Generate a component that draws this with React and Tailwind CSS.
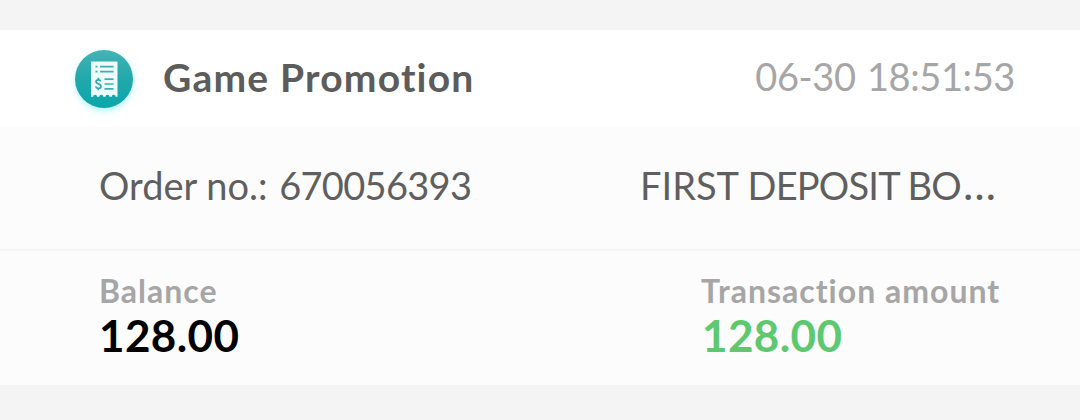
import React from 'react';

const ReceiptIcon = () => (
    <svg width="76" height="76" viewBox="0 0 76 76" fill="none" className="block shrink-0">
        <defs>
            <linearGradient id="disc" x1="38" y1="8" x2="38" y2="66" gradientUnits="userSpaceOnUse">
                <stop stopColor="#45b3b5" />
                <stop offset="0.5" stopColor="#20a8ac" />
                <stop offset="1" stopColor="#0aa6ab" />
            </linearGradient>
            <filter id="glow" x="-20%" y="-20%" width="140%" height="140%">
                <feGaussianBlur stdDeviation="3" />
            </filter>
        </defs>
        <circle cx="38" cy="40" r="29" fill="#9df3f5" opacity="0.75" filter="url(#glow)" />
        <circle cx="38" cy="37" r="29" fill="url(#disc)" />
        <path
            d="M25 19.5h26.5v35.2h-1.8a2 2 0 0 0-4 0h-2.2a2 2 0 0 0-4 0h-2.2a2 2 0 0 0-4 0h-2.2a2 2 0 0 0-4 0H25z"
            fill="#f0fcfc"
        />
        <path d="M29.5 24.7h2M34 24.7h13.5M29.5 29.6h2M34 29.6h13.5M38.5 37.2h9M38.5 42h9M38.5 46.8h9" stroke="#3bb0b3" strokeWidth="1.7" />
        <path
            d="M34.8 39.4c-.4-1.1-1.3-1.6-2.4-1.6-1.4 0-2.4.7-2.4 1.9 0 2.8 5 1.6 5 4.5 0 1.3-1 2.1-2.6 2.1-1.4 0-2.4-.6-2.7-1.9M32.4 35.8v2M32.4 46.3v2"
            stroke="#2aa9ad"
            strokeWidth="1.7"
        />
    </svg>
);

const App = () => {
    return (
        <div className="h-[420px] w-full overflow-hidden bg-[#f4f4f4] pt-[30px] font-['Lato',sans-serif]">
            <div className="h-[355px] bg-[#fcfcfc]">
                {/* Header */}
                <div className="flex h-[97px] items-start justify-between bg-white pl-[66px] pr-[65px]">
                    <div className="flex items-start">
                        <div className="pt-[12px]">
                            <ReceiptIcon />
                        </div>
                        <h1 className="ml-[21px] mt-[24px] whitespace-nowrap text-[39px] font-bold leading-[46px] tracking-[1.2px] text-[#5c5c5c]">
                            Game Promotion
                        </h1>
                    </div>
                    <span className="mt-[23px] whitespace-nowrap text-[38px] leading-[46px] tracking-[-0.4px] text-[#a6a6a6] [word-spacing:2px]">
                        06-30 18:51:53
                    </span>
                </div>

                {/* Order */}
                <div className="flex h-[124px] items-start justify-between border-b-2 border-[#f5f5f5] pl-[99px] pr-[78px] pt-[35px] text-[38px] leading-[46px] text-[#5f5f5f]">
                    <span className="whitespace-nowrap">
                        Order no.: <span className="ml-[2px] tracking-[-0.7px]">670056393</span>
                    </span>
                    <span className="w-[362px] whitespace-nowrap">
                        FIRST <span className="tracking-[-0.8px]">DEPOSIT BO</span>
                        <span className="ml-[2px] text-[44px] leading-[0]">…</span>
                    </span>
                </div>

                {/* Amounts */}
                <div className="flex items-start justify-between pl-[99px] pr-[74px] pt-[20px] font-bold">
                    <div className="flex flex-col">
                        <span className="text-[32px] leading-[40px] tracking-[1px] text-[#a6a6a6]">Balance</span>
                        <span className="text-[44px] leading-[48px] tracking-[0.4px] text-black">128.00</span>
                    </div>
                    <div className="flex w-[305px] flex-col">
                        <span className="whitespace-nowrap text-[32px] leading-[40px] tracking-[1px] text-[#a6a6a6]">Transaction amount</span>
                        <span className="ml-px text-[44px] leading-[48px] tracking-[0.4px] text-[#5dc86f]">128.00</span>
                    </div>
                </div>
            </div>
        </div>
    );
};

export default App;
